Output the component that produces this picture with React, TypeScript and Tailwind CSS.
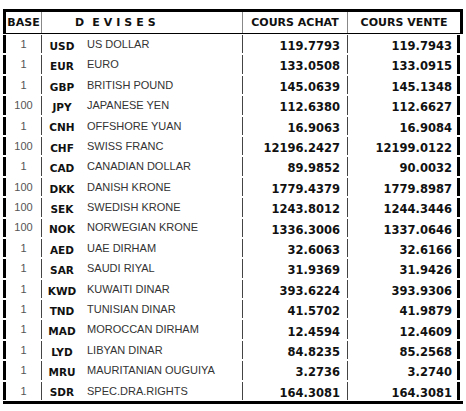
const rows: [string, string, string, string, string][] = [
  ["1", "USD", "US DOLLAR", "119.7793", "119.7943"],
  ["1", "EUR", "EURO", "133.0508", "133.0915"],
  ["1", "GBP", "BRITISH POUND", "145.0639", "145.1348"],
  ["100", "JPY", "JAPANESE YEN", "112.6380", "112.6627"],
  ["1", "CNH", "OFFSHORE YUAN", "16.9063", "16.9084"],
  ["100", "CHF", "SWISS FRANC", "12196.2427", "12199.0122"],
  ["1", "CAD", "CANADIAN DOLLAR", "89.9852", "90.0032"],
  ["100", "DKK", "DANISH KRONE", "1779.4379", "1779.8987"],
  ["100", "SEK", "SWEDISH KRONE", "1243.8012", "1244.3446"],
  ["100", "NOK", "NORWEGIAN KRONE", "1336.3006", "1337.0646"],
  ["1", "AED", "UAE DIRHAM", "32.6063", "32.6166"],
  ["1", "SAR", "SAUDI RIYAL", "31.9369", "31.9426"],
  ["1", "KWD", "KUWAITI DINAR", "393.6224", "393.9306"],
  ["1", "TND", "TUNISIAN DINAR", "41.5702", "41.9879"],
  ["1", "MAD", "MOROCCAN DIRHAM", "12.4594", "12.4609"],
  ["1", "LYD", "LIBYAN DINAR", "84.8235", "85.2568"],
  ["1", "MRU", "MAURITANIAN OUGUIYA", "3.2736", "3.2740"],
  ["1", "SDR", "SPEC.DRA.RIGHTS", "164.3081", "164.3081"],
]

export default function App() {
  const bold = "font-['DejaVu_Sans',sans-serif] font-bold"
  const plain = "font-['Liberation_Sans',Arial,sans-serif]"

  return (
    <div className="w-[466px] h-[411px] bg-white pt-[9px] pl-[3px]">
      <div className="w-[460px]">
        {/* Header */}
        <div
          className={`flex h-[25px] border-t-[3px] border-b border-x-[3px] border-black text-[11px] text-[#111] ${bold}`}
        >
          <div className="w-[35px] flex items-center justify-center pt-[2px]">BASE</div>
          <div className="w-[201px] flex items-center pl-[33px] pt-[2px] border-l border-[#888]">
            <span>D</span>
            <span className="ml-[8px] tracking-[4px]">EVISES</span>
          </div>
          <div className="w-[105px] flex items-center justify-center pt-[2px] border-l border-[#888]">
            COURS ACHAT
          </div>
          <div className="flex-1 flex items-center justify-center pt-[2px] border-l border-[#888]">
            COURS VENTE
          </div>
        </div>

        {/* Body */}
        {rows.map(([base, code, name, buy, sell]) => (
          <div key={code} className="h-[20.4px] py-[1px]">
            <div className="flex h-full">
              <div
                className={`w-[38px] border-l-[3px] border-black flex items-center justify-center text-[11px] text-[#555] ${plain}`}
              >
                {base}
              </div>
              <div className="w-[201px] border-l border-[#444] flex items-center">
                <span
                  className={`w-[40px] text-center pt-[5px] text-[10.5px] text-[#111] ${bold}`}
                >
                  {code}
                </span>
                <span className={`ml-[5px] text-[11px] text-[#333] ${plain}`}>{name}</span>
              </div>
              <div
                className={`w-[105px] border-l border-[#444] flex items-center justify-end pr-[7px] pt-[5px] text-[11.5px] text-[#111] ${bold}`}
              >
                {buy}
              </div>
              <div
                className={`w-[113px] border-l border-r-[3px] border-l-[#444] border-r-black flex items-center justify-end pr-[5px] pt-[5px] text-[11.5px] text-[#111] ${bold}`}
              >
                {sell}
              </div>
            </div>
          </div>
        ))}

        {/* Bottom rule */}
        <div className="border-t-[3px] border-black" />
      </div>
    </div>
  )
}
